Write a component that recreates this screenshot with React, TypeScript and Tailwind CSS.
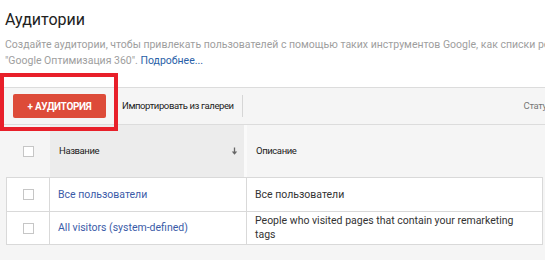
const rows = [
  { name: 'Все пользователи', desc: 'Все пользователи' },
  {
    name: 'All visitors (system-defined)',
    desc: 'People who visited pages that contain your remarketing tags',
  },
];

const Checkbox = () => (
  <span className="block h-[11px] w-[11px] border border-[#c6c6c6] bg-white" />
);

const App = () => {
  return (
    <div className="relative h-[260px] w-[545px] overflow-hidden bg-white font-['Roboto',sans-serif] text-[10.5px] text-[#333]">
      {/* заголовок */}
      <div className="px-[5px] pt-[10px]">
        <h1 className="text-[16px] leading-[20px] text-[#212121]">Аудитории</h1>
        <div className="mt-[7px] leading-[16px] text-[#9e9e9e]">
          <p className="whitespace-nowrap">
            Создайте аудитории, чтобы привлекать пользователей с помощью таких инструментов Google, как списки ремаркетинга и
          </p>
          <p className="whitespace-nowrap">
            "Google Оптимизация 360". <span className="text-[#2a5fa8]">Подробнее...</span>
          </p>
        </div>
      </div>

      {/* панель */}
      <div className="mt-[18px] flex h-[38px] items-center border-y border-[#dcdcdc] bg-[#f5f5f5] text-[9.5px] tracking-[-0.4px]">
        <button className="ml-[13px] flex h-[24px] w-[93px] items-center justify-center rounded-[2px] bg-[#dd4b39] text-[10px] font-bold tracking-[-0.3px] text-white">
          + АУДИТОРИЯ
        </button>
        <span className="ml-[16px] text-[#222]">Импортировать из галереи</span>
        <span className="ml-[8px] h-[22px] w-px bg-[#d6d6d6]" />
        <span className="ml-auto mr-[-6px] text-[#777]">Статус</span>
      </div>

      {/* таблица */}
      <div className="h-full bg-[#f5f5f5] pl-[6px] pr-[2px]">
        <div className="flex h-[52px] items-stretch text-[9.5px] tracking-[-0.4px]">
          <div className="flex w-[44px] items-center justify-center">
            <Checkbox />
          </div>
          <div className="flex w-[194px] items-center justify-between bg-[#ececec] pl-[9px] pr-[6px] text-[#222]">
            <span>Название</span>
            <svg width="7" height="9" viewBox="0 0 7 9" className="text-[#666]">
              <path d="M3.5 0.5v6" stroke="currentColor" strokeWidth="1.3" />
              <path d="M0.8 4.5L3.5 7.8 6.2 4.5z" fill="currentColor" />
            </svg>
          </div>
          <div className="w-[3px] bg-[#fafafa]" />
          <div className="flex flex-1 items-center pl-[9px] text-[#222]">Описание</div>
        </div>
        <div className="border border-[#d9d9d9] bg-white">
          {rows.map((r, i) => (
            <div
              key={r.name}
              className={`flex h-[33px] items-stretch ${i > 0 ? 'border-t border-[#d9d9d9]' : ''}`}
            >
              <div className="flex w-[43px] items-center justify-center border-r border-[#d9d9d9]">
                <Checkbox />
              </div>
              <div className="flex w-[197px] items-center border-r border-[#d9d9d9] pl-[8px] text-[#3b5ba8]">
                {r.name}
              </div>
              <div className="flex w-[270px] items-center pl-[8px] leading-[14px] text-[#333]">
                {r.desc}
              </div>
            </div>
          ))}
        </div>
      </div>

      {/* выделение */}
      <div className="absolute left-0 top-[73px] h-[58px] w-[118px] border-[4px] border-[#e8202a]" />
    </div>
  );
};

export default App;
